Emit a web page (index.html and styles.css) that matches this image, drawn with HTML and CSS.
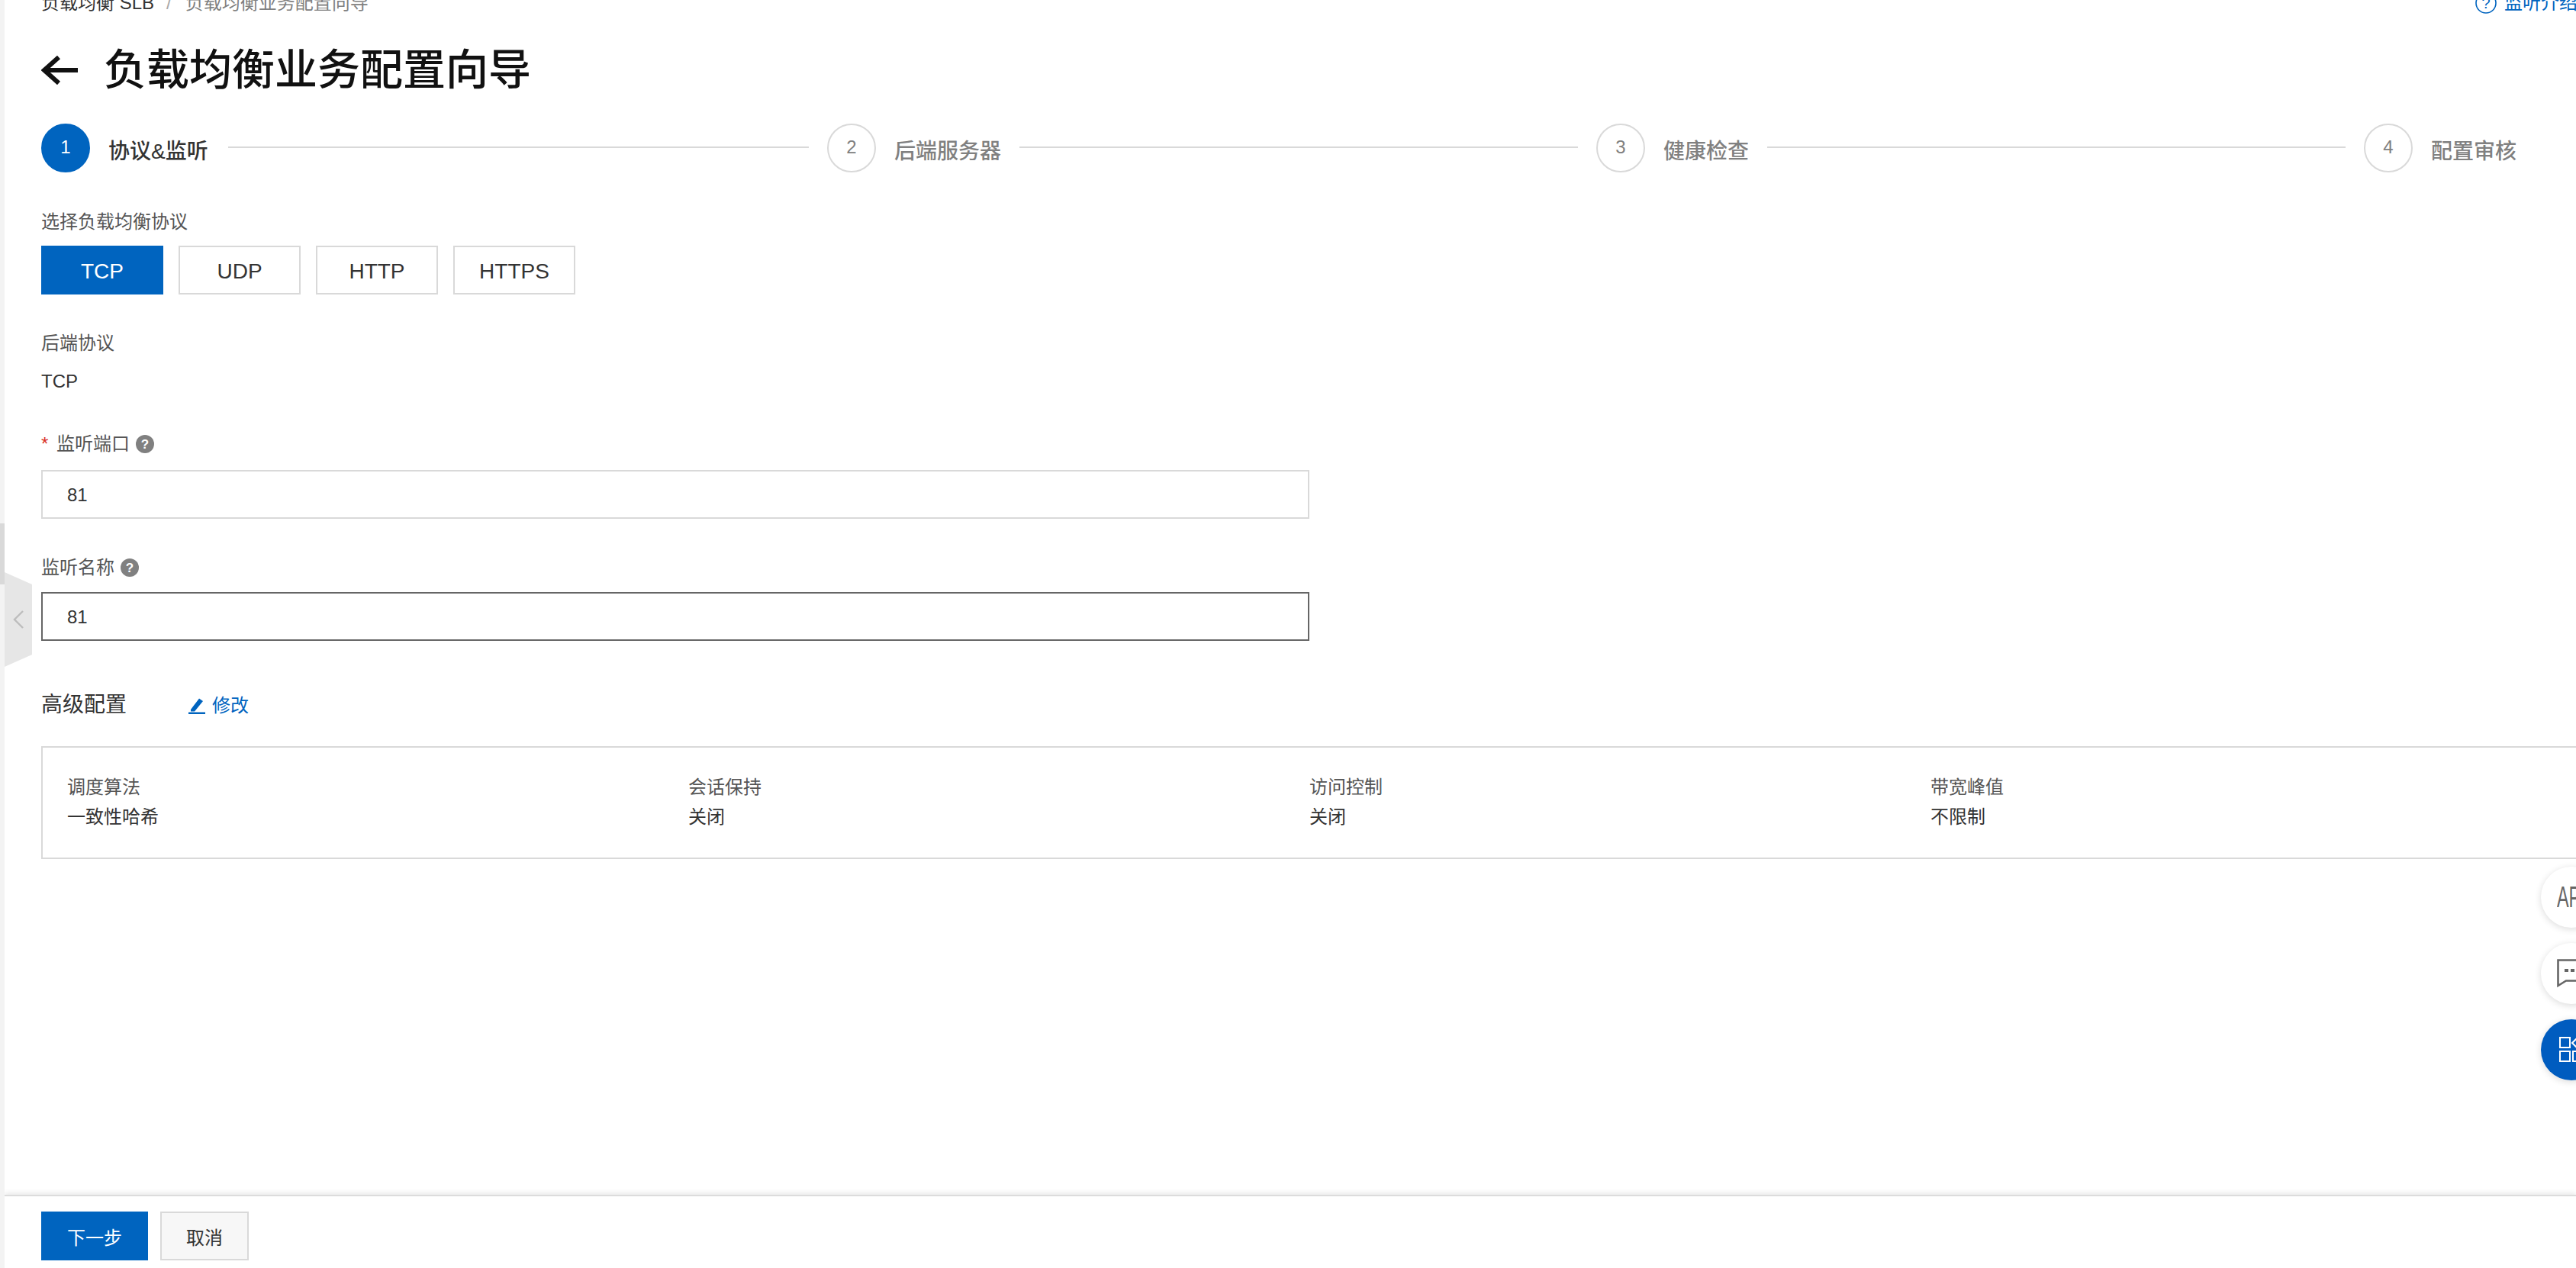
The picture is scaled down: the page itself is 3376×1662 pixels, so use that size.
FILE: index.html

```html
<!DOCTYPE html>
<html lang="zh-CN">
<head>
<meta charset="utf-8"/>
<title>负载均衡业务配置向导</title>
<link rel="stylesheet" href="styles.css">
</head>
<body>
<div class="app">
  <div class="rail"><div class="rail-thumb"></div></div>
  <div class="main">
    <div class="content">
      <div class="top-bar">
        <div class="crumbs">
          <span class="crumb-link">负载均衡 SLB</span>
          <span class="crumb-sep">/</span>
          <span class="crumb-current">负载均衡业务配置向导</span>
        </div>
        <a class="help-link">
          <svg class="help-icon" width="28" height="28" viewBox="0 0 28 28">
            <circle cx="14" cy="14" r="13" fill="none" stroke="#0064bf" stroke-width="1.6"/>
            <text x="14" y="21" text-anchor="middle" font-size="20" fill="#0064bf">?</text>
          </svg>
          监听介绍
        </a>
      </div>

      <div class="title-row">
        <svg class="back-arrow" width="48" height="38" viewBox="0 0 48 38">
          <path d="M48 19H5M23 2L4 19l19 17" fill="none" stroke="#111" stroke-width="6"/>
        </svg>
        <h1>负载均衡业务配置向导</h1>
      </div>

      <div class="steps">
        <div class="step step-active">
          <div class="step-num">1</div>
          <div class="step-label">协议&amp;监听</div>
          <div class="step-line"></div>
        </div>
        <div class="step">
          <div class="step-num">2</div>
          <div class="step-label">后端服务器</div>
          <div class="step-line"></div>
        </div>
        <div class="step">
          <div class="step-num">3</div>
          <div class="step-label">健康检查</div>
          <div class="step-line"></div>
        </div>
        <div class="step">
          <div class="step-num">4</div>
          <div class="step-label">配置审核</div>
        </div>
      </div>

      <div class="field-label first-label">选择负载均衡协议</div>
      <div class="proto-buttons">
        <div class="proto proto-on">TCP</div>
        <div class="proto">UDP</div>
        <div class="proto">HTTP</div>
        <div class="proto">HTTPS</div>
      </div>

      <div class="field-label backend-label">后端协议</div>
      <div class="plain-value">TCP</div>

      <div class="field-label port-label">
        <span class="required">*</span>监听端口
        <svg class="tip" width="24" height="24" viewBox="0 0 24 24">
          <circle cx="12" cy="12" r="12" fill="#808080"/>
          <text x="12" y="18" text-anchor="middle" font-size="17" font-weight="700" fill="#fff">?</text>
        </svg>
      </div>
      <input class="text-input port-input" value="81">

      <div class="field-label name-label">
        监听名称
        <svg class="tip" width="24" height="24" viewBox="0 0 24 24">
          <circle cx="12" cy="12" r="12" fill="#808080"/>
          <text x="12" y="18" text-anchor="middle" font-size="17" font-weight="700" fill="#fff">?</text>
        </svg>
      </div>
      <input class="text-input input-focus" value="81">

      <div class="advanced-head">
        <div class="advanced-title">高级配置</div>
        <a class="edit-link">
          <svg width="22" height="22" viewBox="0 0 22 22">
            <path d="M3 16L14 1.5l5 3.5L8 18.5H3z" fill="#0064bf"/>
            <rect x="0" y="19.5" width="22" height="2.5" fill="#0064bf"/>
          </svg>
          修改
        </a>
      </div>

      <div class="summary">
        <div class="summary-item"><div class="summary-key">调度算法</div><div class="summary-val">一致性哈希</div></div>
        <div class="summary-item"><div class="summary-key">会话保持</div><div class="summary-val">关闭</div></div>
        <div class="summary-item"><div class="summary-key">访问控制</div><div class="summary-val">关闭</div></div>
        <div class="summary-item"><div class="summary-key">带宽峰值</div><div class="summary-val">不限制</div></div>
      </div>
    </div>

    <div class="footer">
      <button class="btn btn-primary">下一步</button>
      <button class="btn btn-plain">取消</button>
    </div>
  </div>
</div>

<div class="collapse-handle">
  <svg width="14" height="24" viewBox="0 0 14 24">
    <path d="M13 1L2 12l11 11" fill="none" stroke="#bdbdbd" stroke-width="2.4"/>
  </svg>
</div>

<div class="float-tools">
  <div class="float-btn"><span class="api-text">API</span></div>
  <div class="float-btn">
    <svg width="46" height="38" viewBox="0 0 46 38">
      <path d="M1.5 1.5h43v27H12L1.5 35z" fill="none" stroke="#666" stroke-width="2.6"/>
      <path d="M10 13h5v4h-5zM18 13h5v4h-5zM26 13h5v4h-5z" fill="#666"/>
    </svg>
  </div>
  <div class="float-btn float-blue">
    <svg width="46" height="34" viewBox="0 0 46 34">
      <path d="M1 1h13v13H1zM1 19h13v13H1zM18 19h13v13H18z" fill="none" stroke="#fff" stroke-width="2"/>
      <path d="M25 0l8 8-8 8-8-8z" fill="none" stroke="#fff" stroke-width="2"/>
    </svg>
  </div>
</div>
</body>
</html>
```

FILE: styles.css

```css
html, body { margin: 0; height: 100%; overflow: hidden; background: #fff; }
body {
  font-family: "Liberation Sans", "Noto Sans CJK SC", sans-serif;
  font-size: 24px;
  color: #333;
  position: relative;
}
.app { display: flex; height: 100vh; }
.rail { width: 6px; flex: none; background: #f3f3f3; }
.rail-thumb { height: 80px; margin-top: 686px; background: #d9d9d9; }
.main { flex: 1; min-width: 0; display: flex; flex-direction: column; overflow: hidden; }
.content { flex: 1; padding-left: 48px; }

.top-bar { display: flex; justify-content: space-between; margin-top: -12px; height: 32px; line-height: 32px; }
.crumbs { display: flex; }
.crumb-link { color: #333; }
.crumb-sep { color: #aaa; margin: 0 18px 0 16px; }
.crumb-current { color: #808080; }
.help-link { display: flex; align-items: center; gap: 10px; color: #0064bf; white-space: nowrap; margin-right: -4px; flex: none; width: 136px; }
.help-icon { flex: none; }

.title-row { display: flex; align-items: center; margin-top: 40px; height: 64px; }
.back-arrow { flex: none; margin-right: 34px; }
h1 { margin: 0; font-size: 56px; line-height: 64px; font-weight: 500; color: #111; }

.steps { display: grid; grid-template-columns: 1030px 1008px 1006px auto; margin-top: 38px; height: 64px; }
.step { display: flex; align-items: flex-start; }
.step-num {
  width: 64px;
  height: 64px;
  box-sizing: border-box;
  flex: none;
  border: 2px solid #d9d9d9;
  border-radius: 50%;
  text-align: center;
  line-height: 58px;
  font-size: 24px;
  color: #808080;
}
.step-label { margin-left: 24px; font-size: 28px; line-height: 74px; font-weight: 500; color: #808080; white-space: nowrap; }
.step-line { flex: 1; height: 2px; margin: 30px 24px 0; background: #d9d9d9; }
.step-active .step-num { background: #0064bf; border-color: #0064bf; color: #fff; }
.step-active .step-label { color: #333; }
.step-active .step-line { margin-left: 26px; }

.field-label { line-height: 32px; color: #555; display: flex; align-items: center; }
.first-label { margin-top: 49px; }
.backend-label { margin-top: 48px; }
.port-label { margin-top: 50px; }
.name-label { margin-top: 48px; }
.required { color: #d93026; width: 20px; }
.tip { margin-left: 8px; }

.proto-buttons { display: flex; gap: 20px; margin-top: 15px; }
.proto {
  width: 160px;
  height: 64px;
  box-sizing: border-box;
  border: 2px solid #d9d9d9;
  text-align: center;
  line-height: 64px;
  font-size: 28px;
  color: #333;
}
.proto-on { background: #0064bf; border-color: #0064bf; color: #fff; }
.plain-value { margin-top: 18px; line-height: 32px; color: #333; }

.text-input {
  display: block;
  width: 1662px;
  height: 64px;
  box-sizing: border-box;
  border: 2px solid #d9d9d9;
  outline: none;
  padding: 1px 32px 0;
  font-family: inherit;
  font-size: 24px;
  color: #333;
  margin-top: 18px;
}
.input-focus { border-color: #666; margin-top: 16px; }

.advanced-head { display: flex; align-items: center; margin-top: 62px; height: 40px; }
.advanced-title { width: 193px; font-size: 28px; line-height: 44px; height: 40px; color: #333; }
.edit-link { display: flex; align-items: center; gap: 9px; color: #0064bf; line-height: 40px; margin-top: 6px; }

.summary {
  display: grid;
  grid-template-columns: repeat(4, 814px);
  margin: 36px -40px 0 0;
  padding: 36px 32px 37px;
  border: 2px solid #d9d9d9;
}
.summary-key { line-height: 32px; color: #555; }
.summary-val { margin-top: 7px; line-height: 32px; color: #333; }

.footer {
  flex: none;
  height: 96px;
  box-sizing: border-box;
  padding: 20px 0 0 48px;
  display: flex;
  gap: 16px;
  align-items: flex-start;
  border-top: 2px solid #dcdcdc;
  box-shadow: 0 -3px 6px rgba(0,0,0,0.08);
}
.btn { height: 64px; box-sizing: border-box; font-family: inherit; font-size: 24px; padding: 0; }
.btn-primary { width: 140px; background: #0064bf; border: none; color: #fff; }
.btn-plain { width: 116px; background: #f7f7f7; border: 2px solid #d9d9d9; color: #333; }

.collapse-handle {
  position: absolute;
  left: 6px;
  top: 750px;
  width: 36px;
  height: 124px;
  background: #e6e6e6;
  clip-path: polygon(0 0, 100% 16px, 100% 108px, 0 100%);
  display: flex;
  align-items: center;
  padding-left: 11px;
  box-sizing: border-box;
}
.float-tools { position: absolute; left: 3330px; top: 1136px; display: flex; flex-direction: column; gap: 20px; }
.float-btn {
  width: 80px;
  height: 80px;
  border-radius: 50%;
  background: #fff;
  box-shadow: 0 2px 10px rgba(0,0,0,0.14);
  display: flex;
  align-items: center;
  padding-left: 21px;
  box-sizing: border-box;
}
.float-blue { background: #005cbf; padding-left: 24px; }
.api-text { font-size: 39px; color: #666; display: inline-block; transform: scaleX(0.6); transform-origin: left center; }
```
